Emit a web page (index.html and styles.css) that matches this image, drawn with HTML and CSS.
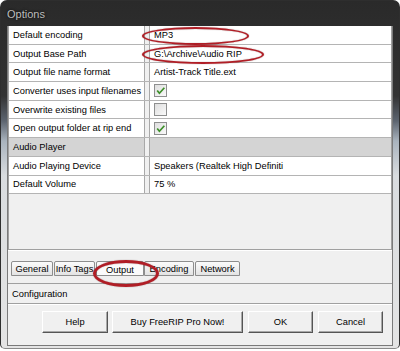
FILE: index.html
```html
<!DOCTYPE html>
<html lang="en">
<head>
    <meta charset="UTF-8">
    <title>Options</title>
    <link rel="stylesheet" href="styles.css">
</head>
<body>
    <div class="window">
        <div class="title-bar">Options</div>
        <div class="client">
            <div class="grid">
                <div class="row">
                    <div class="label">Default encoding</div>
                    <div class="value">MP3</div>
                </div>
                <div class="row">
                    <div class="label">Output Base Path</div>
                    <div class="value">G:\Archive\Audio RIP</div>
                </div>
                <div class="row">
                    <div class="label">Output file name format</div>
                    <div class="value">Artist-Track Title.ext</div>
                </div>
                <div class="row">
                    <div class="label">Converter uses input filenames</div>
                    <div class="value"><span class="checkbox checked"><svg viewBox="0 0 10 10"><polyline points="2,5 4,7.5 8.5,2.5"/></svg></span></div>
                </div>
                <div class="row">
                    <div class="label">Overwrite existing files</div>
                    <div class="value"><span class="checkbox"></span></div>
                </div>
                <div class="row">
                    <div class="label">Open output folder at rip end</div>
                    <div class="value"><span class="checkbox checked"><svg viewBox="0 0 10 10"><polyline points="2,5 4,7.5 8.5,2.5"/></svg></span></div>
                </div>
                <div class="row category">
                    <div class="label">Audio Player</div>
                    <div class="value"></div>
                </div>
                <div class="row">
                    <div class="label">Audio Playing Device</div>
                    <div class="value">Speakers (Realtek High Definiti</div>
                </div>
                <div class="row">
                    <div class="label">Default Volume</div>
                    <div class="value">75 %</div>
                </div>
            </div>

            <div class="tabs">
                <div class="tab tab-general">General</div>
                <div class="tab tab-info">Info Tags</div>
                <div class="tab tab-output active">Output</div>
                <div class="tab tab-encoding">Encoding</div>
                <div class="tab tab-network">Network</div>
            </div>

            <div class="description">Configuration</div>

            <div class="buttons">
                <button class="btn btn-help">Help</button>
                <button class="btn btn-buy">Buy FreeRIP Pro Now!</button>
                <button class="btn btn-ok">OK</button>
                <button class="btn btn-cancel">Cancel</button>
            </div>
        </div>

        <!-- red marks drawn over the screenshot -->
        <div class="mark mark-encoding"></div>
        <div class="mark mark-path"></div>
        <div class="mark mark-tab"></div>
    </div>
</body>
</html>
```

FILE: styles.css
```css
body {
    margin: 0;
    background: #ffffff;
    font-family: 'Liberation Sans', Arial, sans-serif;
    font-size: 9.3px;
    color: #000;
}

.window {
    position: relative;
    width: 400px;
    height: 349px;
    box-sizing: border-box;
    border: 1px solid #2e2e2e;
    border-bottom-color: #8a8a8a;
    border-radius: 7px 7px 5px 5px;
    padding: 0 6px 2px 6px;
    display: flex;
    flex-direction: column;
    background: linear-gradient(to bottom, #2a2a2a 0, #333 95px, #5d6570 120px, #a9b3bd 140px, #d9dcdf 175px, #e4e4e4 100%);
}

.title-bar {
    height: 25px;
    display: flex;
    align-items: center;
    padding-top: 1px;
    box-sizing: border-box;
    color: #bdbdbd;
    font-size: 11px;
    text-shadow: 0 0 3px #000;
}

.client {
    flex: 1;
    background: #f0f0f0;
    display: flex;
    flex-direction: column;
    border: 1px solid #7a7a7a;
    border-top: none;
}

/* property grid */
.grid {
    height: 224px;
    box-sizing: border-box;
    border: 1px solid #a0a0a0;
    border-top: none;
    background: #f0f0f0;
    box-shadow: 0 1px 0 #fff;
}

.row {
    display: grid;
    grid-template-columns: 136px 4px 1fr;
    height: 18.7px;
    box-sizing: border-box;
    border-bottom: 1px solid #b4b4b4;
}

.label {
    background: #fff;
    border-right: 1px solid #a8a8a8;
    padding-left: 4px;
    display: flex;
    align-items: center;
    white-space: nowrap;
    overflow: hidden;
}

.value {
    grid-column: 3;
    background: #fff;
    border-left: 1px solid #a8a8a8;
    padding-left: 4px;
    display: flex;
    align-items: center;
    white-space: nowrap;
    overflow: hidden;
}

.category .label,
.category .value {
    background: #d4d4d4;
}

.checkbox {
    width: 11px;
    height: 11px;
    border: 1px solid #8e8f8f;
    background: linear-gradient(135deg, #dedede, #fafafa);
    display: flex;
}

.checkbox svg {
    width: 11px;
    height: 11px;
}

.checkbox polyline {
    fill: none;
    stroke: #3d8f2a;
    stroke-width: 1.6;
}

/* tabs */
.tabs {
    display: flex;
    gap: 1px;
    margin-top: 11px;
    padding-left: 3px;
    height: 15px;
}

.tab {
    box-sizing: border-box;
    height: 15px;
    border: 1px solid #8d8d8d;
    border-radius: 2px 2px 0 0;
    background: linear-gradient(#fbfbfb, #e3e3e3);
    display: flex;
    align-items: center;
    justify-content: center;
}

.tab-general { width: 42px; }
.tab-info { width: 41px; }
.tab-output { width: 48px; }
.tab-encoding { width: 50px; margin-left: -1px; }
.tab-network { width: 45px; }

.tab.active {
    background: #fbfbfb;
    padding-top: 2px;
}

/* description panel */
.description {
    margin-top: 7px;
    height: 21px;
    box-sizing: border-box;
    border-top: 1px solid #a0a0a0;
    border-bottom: 1px solid #a0a0a0;
    box-shadow: 0 1px 0 #fff;
    padding-left: 4px;
    display: flex;
    align-items: center;
}

/* dialog buttons */
.buttons {
    display: flex;
    justify-content: flex-end;
    gap: 5px;
    margin-top: 7px;
    padding-right: 9px;
}

.btn {
    height: 22px;
    font-family: inherit;
    font-size: 9.3px;
    color: #000;
    background: #f0f0f0;
    border: 1px solid;
    border-color: #fff #555 #555 #fff;
    box-shadow: inset -1px -1px 0 #a8a8a8;
    padding: 0;
}

.btn-help { width: 66px; margin-right: -1px; }
.btn-buy { width: 131px; }
.btn-ok { width: 65px; }
.btn-cancel { width: 65px; }

/* annotation ellipses */
.mark {
    position: absolute;
    border: 2px solid #b01e26;
    border-radius: 50%;
    box-shadow: 0 0 1px rgba(60, 0, 0, 0.6), inset 0 0 1px rgba(60, 0, 0, 0.6);
}

.mark-encoding {
    left: 141px;
    top: 26px;
    width: 103px;
    height: 14px;
}

.mark-path {
    left: 141px;
    top: 44px;
    width: 118px;
    height: 15px;
}

.mark-tab {
    left: 92px;
    top: 259px;
    width: 60px;
    height: 21px;
    border-width: 3px;
}
```
